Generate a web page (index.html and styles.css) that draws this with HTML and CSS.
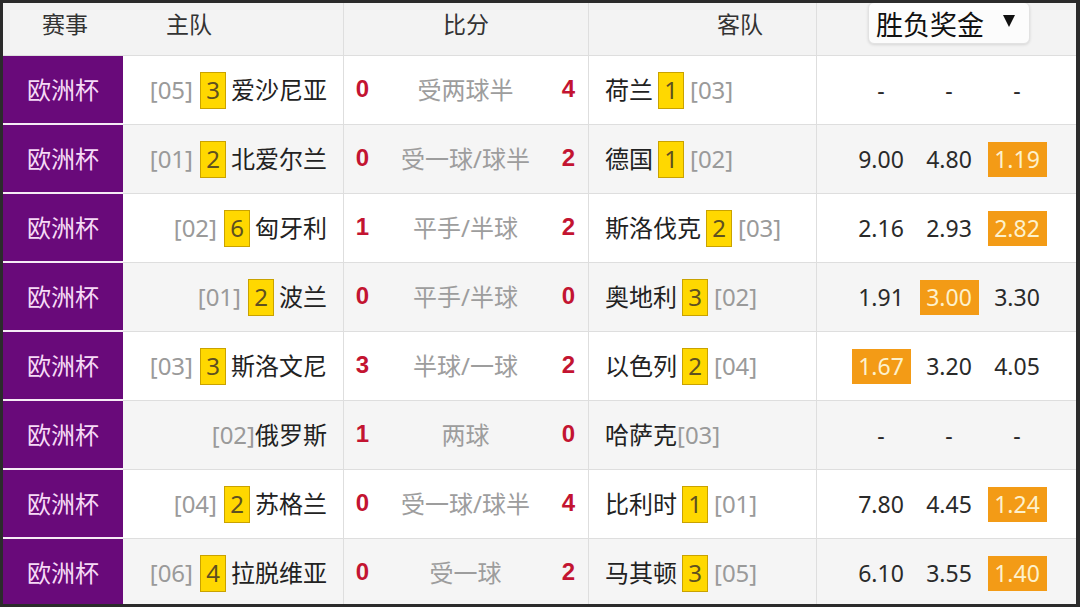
FILE: index.html
```html
<!DOCTYPE html>
<html lang="zh">
<head>
<meta charset="utf-8">
<link rel="stylesheet" href="styles.css">
</head>
<body>
<div class="frame">
  <div class="row head">
    <div class="c c1">赛事</div>
    <div class="c c2">主队</div>
    <div class="c c3">比分</div>
    <div class="c c4">客队</div>
    <div class="c c5"><div class="dd"><span>胜负奖金</span><svg class="arrow" width="12" height="12" viewBox="0 0 12 12"><polygon points="0,0 12,0 6,12" fill="#111"/></svg></div></div>
  </div>

  <div class="row">
    <div class="c c1 cup">欧洲杯</div>
    <div class="c c2 home"><span class="rank">[05]</span><span class="pos">3</span><span class="name">爱沙尼亚</span></div>
    <div class="c c3 score"><span class="goal">0</span><span class="hc">受两球半</span><span class="goal">4</span></div>
    <div class="c c4 away"><span class="name">荷兰</span><span class="pos">1</span><span class="rank">[03]</span></div>
    <div class="c c5 odds"><span class="o">-</span><span class="o">-</span><span class="o">-</span></div>
  </div>

  <div class="row alt">
    <div class="c c1 cup">欧洲杯</div>
    <div class="c c2 home"><span class="rank">[01]</span><span class="pos">2</span><span class="name">北爱尔兰</span></div>
    <div class="c c3 score"><span class="goal">0</span><span class="hc">受一球/球半</span><span class="goal">2</span></div>
    <div class="c c4 away"><span class="name">德国</span><span class="pos">1</span><span class="rank">[02]</span></div>
    <div class="c c5 odds"><span class="o">9.00</span><span class="o">4.80</span><span class="o"><b class="hl">1.19</b></span></div>
  </div>

  <div class="row">
    <div class="c c1 cup">欧洲杯</div>
    <div class="c c2 home"><span class="rank">[02]</span><span class="pos">6</span><span class="name">匈牙利</span></div>
    <div class="c c3 score"><span class="goal">1</span><span class="hc">平手/半球</span><span class="goal">2</span></div>
    <div class="c c4 away"><span class="name">斯洛伐克</span><span class="pos">2</span><span class="rank">[03]</span></div>
    <div class="c c5 odds"><span class="o">2.16</span><span class="o">2.93</span><span class="o"><b class="hl">2.82</b></span></div>
  </div>

  <div class="row alt">
    <div class="c c1 cup">欧洲杯</div>
    <div class="c c2 home"><span class="rank">[01]</span><span class="pos">2</span><span class="name">波兰</span></div>
    <div class="c c3 score"><span class="goal">0</span><span class="hc">平手/半球</span><span class="goal">0</span></div>
    <div class="c c4 away"><span class="name">奥地利</span><span class="pos">3</span><span class="rank">[02]</span></div>
    <div class="c c5 odds"><span class="o">1.91</span><span class="o"><b class="hl">3.00</b></span><span class="o">3.30</span></div>
  </div>

  <div class="row">
    <div class="c c1 cup">欧洲杯</div>
    <div class="c c2 home"><span class="rank">[03]</span><span class="pos">3</span><span class="name">斯洛文尼</span></div>
    <div class="c c3 score"><span class="goal">3</span><span class="hc">半球/一球</span><span class="goal">2</span></div>
    <div class="c c4 away"><span class="name">以色列</span><span class="pos">2</span><span class="rank">[04]</span></div>
    <div class="c c5 odds"><span class="o"><b class="hl">1.67</b></span><span class="o">3.20</span><span class="o">4.05</span></div>
  </div>

  <div class="row alt">
    <div class="c c1 cup">欧洲杯</div>
    <div class="c c2 home"><span class="rank tight">[02]</span><span class="name">俄罗斯</span></div>
    <div class="c c3 score"><span class="goal">1</span><span class="hc">两球</span><span class="goal">0</span></div>
    <div class="c c4 away"><span class="name tight">哈萨克</span><span class="rank">[03]</span></div>
    <div class="c c5 odds"><span class="o">-</span><span class="o">-</span><span class="o">-</span></div>
  </div>

  <div class="row">
    <div class="c c1 cup">欧洲杯</div>
    <div class="c c2 home"><span class="rank">[04]</span><span class="pos">2</span><span class="name">苏格兰</span></div>
    <div class="c c3 score"><span class="goal">0</span><span class="hc">受一球/球半</span><span class="goal">4</span></div>
    <div class="c c4 away"><span class="name">比利时</span><span class="pos">1</span><span class="rank">[01]</span></div>
    <div class="c c5 odds"><span class="o">7.80</span><span class="o">4.45</span><span class="o"><b class="hl">1.24</b></span></div>
  </div>

  <div class="row alt">
    <div class="c c1 cup">欧洲杯</div>
    <div class="c c2 home"><span class="rank">[06]</span><span class="pos">4</span><span class="name">拉脱维亚</span></div>
    <div class="c c3 score"><span class="goal">0</span><span class="hc">受一球</span><span class="goal">2</span></div>
    <div class="c c4 away"><span class="name">马其顿</span><span class="pos">3</span><span class="rank">[05]</span></div>
    <div class="c c5 odds"><span class="o">6.10</span><span class="o">3.55</span><span class="o"><b class="hl">1.40</b></span></div>
  </div>
</div>
</body>
</html>
```

FILE: styles.css
```css
* { box-sizing: border-box; }
html, body {
  margin: 0;
  padding: 0;
  background: #2b2b2b;
}
body {
  font-family: "Noto Sans", "Noto Sans CJK SC", sans-serif;
  color: #222;
}
.frame {
  width: 1080px;
  height: 607px;
  border: 3px solid #2b2b2b;
  border-right-width: 4px;
  background: #fff;
  overflow: hidden;
}
.row {
  display: grid;
  grid-template-columns: 120px 221px 245px 228px 259px;
  height: 69px;
  background: #fff;
}
.row.alt { background: #f5f5f5; }
.row.head {
  height: 53px;
  background: #f3f3f3;
}
.c {
  display: flex;
  align-items: center;
  border-bottom: 1px solid #dedede;
  font-size: 24px;
  line-height: 24px;
  white-space: nowrap;
}
.c2, .c3, .c4 { border-right: 1px solid #dedede; }

.head .c {
  align-items: flex-start;
  padding-top: 9px;
  color: #333;
  font-size: 23px;
}
.head .c1 { justify-content: center; padding-left: 4px; }
.head .c2 { padding-left: 43px; }
.head .c3 { justify-content: center; }
.head .c4 { padding-left: 128px; }
.head .c5 { padding-top: 0; padding-left: 51px; }

.dd {
  display: flex;
  align-items: center;
  width: 162px;
  height: 42px;
  margin-top: -1px;
  padding-left: 7px;
  background: #fcfcfc;
  border: 1px solid #e2e2e2;
  border-radius: 6px;
  box-shadow: 0 1px 3px rgba(0, 0, 0, 0.12);
  font-size: 27px;
  line-height: 27px;
  color: #111;
}
.dd span { padding-top: 2px; }
.arrow { margin-left: 19px; margin-top: -4px; }

.cup {
  justify-content: center;
  background: #690a7a;
  color: #f6daf6;
  border-bottom: 2px solid #f6ecf6;
}

.home {
  justify-content: flex-end;
  padding-right: 16px;
}
.away { padding-left: 16px; }

.rank { color: #9a9a9a; }
.name { color: #222; }
.pos {
  display: flex;
  align-items: center;
  justify-content: center;
  width: 26px;
  height: 37px;
  background: #ffd800;
  border: 1px solid #c9a200;
  color: #5e5020;
}
.home .pos { margin: 0 5px 0 7px; }
.away .pos { margin: 0 6px 0 5px; }

.score {
  justify-content: space-between;
  padding: 0 11px 0 10px;
}
.goal {
  font-family: "Liberation Sans", sans-serif;
  font-weight: bold;
  font-size: 24px;
  color: #c31431;
  width: 17px;
  text-align: center;
  margin-top: -2px;
}
.hc { color: #9d9d9d; }

.odds {
  display: grid;
  grid-template-columns: 68px 68px 68px;
  align-items: center;
  padding-left: 30px;
  font-size: 23px;
  color: #2a2a2a;
}
.o {
  display: flex;
  justify-content: center;
  align-items: center;
}
.hl {
  display: flex;
  align-items: center;
  justify-content: center;
  width: 59px;
  height: 35px;
  background: #f39b16;
  color: #fdf1cc;
  font-weight: normal;
}
```
